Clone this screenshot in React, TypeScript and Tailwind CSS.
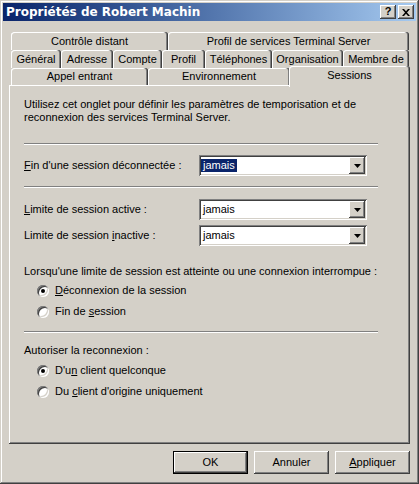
import React from "react";

const raised =
  "shadow-[inset_-1px_-1px_#404040,inset_1px_1px_#ffffff,inset_-2px_-2px_#808080,inset_2px_2px_#d4d0c8]";
const sunken =
  "shadow-[inset_1px_1px_#808080,inset_-1px_-1px_#ffffff,inset_2px_2px_#404040,inset_-2px_-2px_#d4d0c8]";
const tabCls =
  "flex items-center justify-center shrink-0 rounded-t-[3px] shadow-[inset_-1px_0_#404040,inset_-2px_0_#808080,inset_1px_1px_#ffffff]";

function Sep() {
  return (
    <div className="w-[354px] h-[2px] border-t border-t-[#808080] border-b border-b-white" />
  );
}

function Combo({ selected }: { selected?: boolean }) {
  return (
    <div className={`relative w-[168px] h-[21px] bg-white flex items-center ${sunken}`}>
      <div className="flex-1 pl-[2px] flex items-center">
        {selected ? (
          <span className="bg-[#0a246a] text-white leading-[13px] h-[13px] px-[2px]">jamais</span>
        ) : (
          <span className="leading-[13px] px-[2px]">jamais</span>
        )}
      </div>
      <div
        className={`w-[16px] h-[17px] mr-[2px] bg-[#d4d0c8] flex items-center justify-center ${raised}`}
      >
        <svg width="7" height="4" viewBox="0 0 7 4">
          <path d="M0 0h7L3.5 4z" fill="#000" />
        </svg>
      </div>
    </div>
  );
}

function Radio({ checked, children }: { checked?: boolean; children: React.ReactNode }) {
  return (
    <div className="flex items-center h-[13px] pl-[13px]">
      <span
        className={`relative w-[12px] h-[12px] rounded-full bg-white flex items-center justify-center ${sunken}`}
      >
        {checked && <span className="w-[4px] h-[4px] rounded-full bg-black" />}
      </span>
      <span className="ml-[6px] leading-[13px]">{children}</span>
    </div>
  );
}

function Btn({ children, def }: { children: React.ReactNode; def?: boolean }) {
  return (
    <div
      className={`w-[75px] h-[23px] flex items-center justify-center ${
        def ? "border border-black" : ""
      }`}
    >
      <div className={`w-full h-full flex items-center justify-center ${raised}`}>
        <span>{children}</span>
      </div>
    </div>
  );
}

export default function App() {
  return (
    <div
      className={`w-[419px] h-[484px] bg-[#d4d0c8] p-[3px] flex flex-col text-[11px] text-black font-['Liberation_Sans',sans-serif] shadow-[inset_-1px_-1px_#404040,inset_1px_1px_#d4d0c8,inset_-2px_-2px_#808080,inset_2px_2px_#ffffff]`}
    >
      {/* Title bar */}
      <div className="h-[18px] flex items-center bg-linear-to-r from-[#0a246a] to-[#a6caf0] pl-[3px] pr-[2px]">
        <span className="flex-1 text-white font-bold text-[12px] leading-[18px] font-['DejaVu_Sans',sans-serif]">
          Propriétés de Robert Machin
        </span>
        <div className={`w-[16px] h-[14px] bg-[#d4d0c8] flex items-center justify-center ${raised}`}>
          <span className="font-bold text-[11px] leading-[11px] mt-[-1px]">?</span>
        </div>
        <div
          className={`w-[16px] h-[14px] ml-[2px] bg-[#d4d0c8] flex items-center justify-center ${raised}`}
        >
          <svg width="8" height="7" viewBox="0 0 8 7">
            <path d="M0 0h2l2 2.3L6 0h2L5 3.5 8 7H6L4 4.7 2 7H0l3-3.5z" fill="#000" />
          </svg>
        </div>
      </div>

      {/* Tabs */}
      <div className="mt-[11px] ml-[8px] flex flex-col">
        <div className="flex h-[18px]">
          <div className={`${tabCls} w-[157px]`}>Contrôle distant</div>
          <div className={`${tabCls} w-[241px]`}>Profil de services Terminal Server</div>
        </div>
        <div className="flex h-[18px]">
          <div className={`${tabCls} w-[50px]`}>Général</div>
          <div className={`${tabCls} w-[52px]`}>Adresse</div>
          <div className={`${tabCls} w-[49px]`}>Compte</div>
          <div className={`${tabCls} w-[43px]`}>Profil</div>
          <div className={`${tabCls} w-[67px]`}>Téléphones</div>
          <div className={`${tabCls} w-[71px]`}>Organisation</div>
          <div className={`${tabCls} w-[66px]`}>Membre de</div>
        </div>
        <div className="flex h-[17px] relative z-10">
          <div className={`${tabCls} w-[137px]`}>Appel entrant</div>
          <div className={`${tabCls} w-[142px]`}>Environnement</div>
          <div
            className={`${tabCls} w-[121px] ml-[-1px] h-[21px] relative top-[-2px] bg-[#d4d0c8] pb-[3px]`}
          >
            Sessions
          </div>
        </div>
      </div>

      {/* Panel */}
      <div className="ml-[6px] w-[401px] h-[359px] flex flex-col pl-[15px] shadow-[inset_-1px_-1px_#404040,inset_1px_1px_#ffffff,inset_-2px_-2px_#808080]">
        <div className="mt-[13px] leading-[13px]">
          Utilisez cet onglet pour définir les paramètres de temporisation et de
          <br />
          reconnexion des services Terminal Server.
        </div>
        <div className="mt-[19px]">
          <Sep />
        </div>
        <div className="mt-[10px] flex items-center">
          <span className="w-[175px]">
            <u>F</u>in d'une session déconnectée :
          </span>
          <Combo selected />
        </div>
        <div className="mt-[10px]">
          <Sep />
        </div>
        <div className="mt-[11px] flex items-center">
          <span className="w-[175px]">
            <u>L</u>imite de session active :
          </span>
          <Combo />
        </div>
        <div className="mt-[5px] flex items-center">
          <span className="w-[175px]">
            Limite de session <u>i</u>nactive :
          </span>
          <Combo />
        </div>
        <div className="mt-[19px] leading-[13px]">
          Lorsqu'une limite de session est atteinte ou une connexion interrompue :
        </div>
        <div className="mt-[6px]">
          <Radio checked>
            <u>D</u>éconnexion de la session
          </Radio>
        </div>
        <div className="mt-[8px]">
          <Radio>
            Fin de <u>s</u>ession
          </Radio>
        </div>
        <div className="mt-[13px]">
          <Sep />
        </div>
        <div className="mt-[11px] leading-[13px]">Autoriser la reconnexion :</div>
        <div className="mt-[7px]">
          <Radio checked>
            D'u<u>n</u> client quelconque
          </Radio>
        </div>
        <div className="mt-[8px]">
          <Radio>
            Du <u>c</u>lient d'origine uniquement
          </Radio>
        </div>
      </div>

      {/* Buttons */}
      <div className="mt-[7px] flex pl-[170px] gap-[6px]">
        <Btn def>OK</Btn>
        <Btn>Annuler</Btn>
        <Btn>
          <u>A</u>ppliquer
        </Btn>
      </div>
    </div>
  );
}
